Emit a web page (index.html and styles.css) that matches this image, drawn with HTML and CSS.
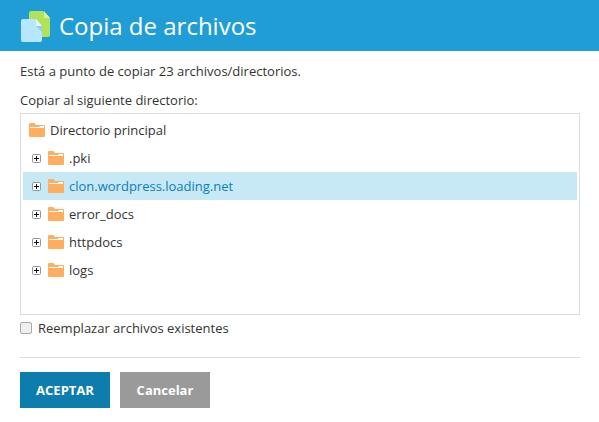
FILE: index.html
```html
<!DOCTYPE html>
<html lang="es">
<head>
<meta charset="utf-8">
<title>Copia de archivos</title>
<link rel="stylesheet" href="styles.css">
</head>
<body>
<svg class="defs" width="0" height="0" aria-hidden="true">
  <symbol id="folder" viewBox="0 0 16 14">
    <path d="M0 1a1 1 0 0 1 1-1h4.5l1.5 2h8a1 1 0 0 1 1 1v10a1 1 0 0 1-1 1H1a1 1 0 0 1-1-1z" fill="#ffad5e"/>
    <path d="M1 5V4h9l1-1h4v2z" fill="#fff"/>
  </symbol>
  <symbol id="expand" viewBox="0 0 9 9">
    <rect x=".5" y=".5" width="8" height="8" rx="1" fill="#fff" stroke="#8a97a3"/>
    <path d="M2 4.5h5M4.5 2v5" stroke="#111" stroke-width="1"/>
  </symbol>
</svg>
<header class="banner">
  <svg class="logo" width="32" height="32" viewBox="0 0 32 32" aria-hidden="true">
    <path d="M11 1h12l7 7v17a2 2 0 0 1-2 2H11a2 2 0 0 1-2-2V3a2 2 0 0 1 2-2z" fill="#b0e35a"/>
    <path d="M24 1l6 7h-6z" fill="#d6f09c"/>
    <path d="M1 11a2 2 0 0 1 2-2h13l6 7v14a2 2 0 0 1-2 2H3a2 2 0 0 1-2-2z" fill="#b7e6ff"/>
    <path d="M16 9l6 7h-6z" fill="#e4f5ff"/>
    <path d="M16 16h6v6z" fill="#92cfee"/>
  </svg>
  <h1 class="title">Copia de archivos</h1>
</header>
<main class="content">
  <p class="intro">Está a punto de copiar 23 archivos/directorios.</p>
  <p class="label">Copiar al siguiente directorio:</p>
  <div class="tree">
    <div class="root"><svg class="folder"><use href="#folder"/></svg><span>Directorio principal</span></div>
    <div class="node"><svg class="expand"><use href="#expand"/></svg><svg class="folder"><use href="#folder"/></svg><span>.pki</span></div>
    <div class="node selected"><svg class="expand"><use href="#expand"/></svg><svg class="folder"><use href="#folder"/></svg><span>clon.wordpress.loading.net</span></div>
    <div class="node"><svg class="expand"><use href="#expand"/></svg><svg class="folder"><use href="#folder"/></svg><span>error_docs</span></div>
    <div class="node"><svg class="expand"><use href="#expand"/></svg><svg class="folder"><use href="#folder"/></svg><span>httpdocs</span></div>
    <div class="node"><svg class="expand"><use href="#expand"/></svg><svg class="folder"><use href="#folder"/></svg><span>logs</span></div>
  </div>
  <label class="replace"><span class="box"></span>Reemplazar archivos existentes</label>
  <div class="actions">
    <button class="btn primary" type="button">ACEPTAR</button>
    <button class="btn secondary" type="button">Cancelar</button>
  </div>
</main>
</body>
</html>
```
FILE: styles.css
```css
* { box-sizing: border-box; }
html, body { margin: 0; padding: 0; }
body {
  width: 599px;
  height: 422px;
  overflow: hidden;
  background: #fff;
  color: #333;
  font-family: "Open Sans", sans-serif;
  font-size: 13px;
  line-height: 18px;
}
.defs { position: absolute; }
.banner {
  height: 51px;
  background: #209dd5;
  display: flex;
  align-items: center;
  padding: 0 0 0 20px;
  gap: 7px;
}
.logo { flex: none; margin-top: 1px; }
.title {
  margin: 0;
  font-size: 24px;
  font-weight: 400;
  line-height: 32px;
  color: #fff;
}
.content { padding: 11px 19px 0 20px; }
.intro { margin: 0 0 11px; }
.label { margin: 0 0 4px; }
.tree {
  height: 202px;
  border: 1px solid #dcdcdc;
  padding: 2px 2px;
}
.root, .node {
  height: 28px;
  display: flex;
  align-items: center;
}
.root { padding-left: 6px; }
.node { padding-left: 9px; }
.selected { background: #c7e8f5; color: #0d7fb8; }
.expand { width: 9px; height: 9px; flex: none; margin-right: 7px; }
.folder { width: 16px; height: 14px; flex: none; margin-right: 5px; }
.replace {
  display: flex;
  align-items: center;
  margin-top: 4px;
  height: 18px;
}
.box {
  width: 12px;
  height: 12px;
  margin-right: 6px;
  border: 1px solid #aaa;
  border-radius: 2px;
  background: #eee;
}
.actions {
  margin-top: 20px;
  padding-top: 14px;
  border-top: 1px solid #ddd;
  display: flex;
  gap: 10px;
}
.btn {
  width: 90px;
  height: 36px;
  border: 0;
  padding: 0;
  color: #fff;
  font-family: "Open Sans", sans-serif;
  font-size: 13px;
  font-weight: 700;
}
.primary { background: #0d7dad; }
.secondary { background: #9a9a9a; }
```
